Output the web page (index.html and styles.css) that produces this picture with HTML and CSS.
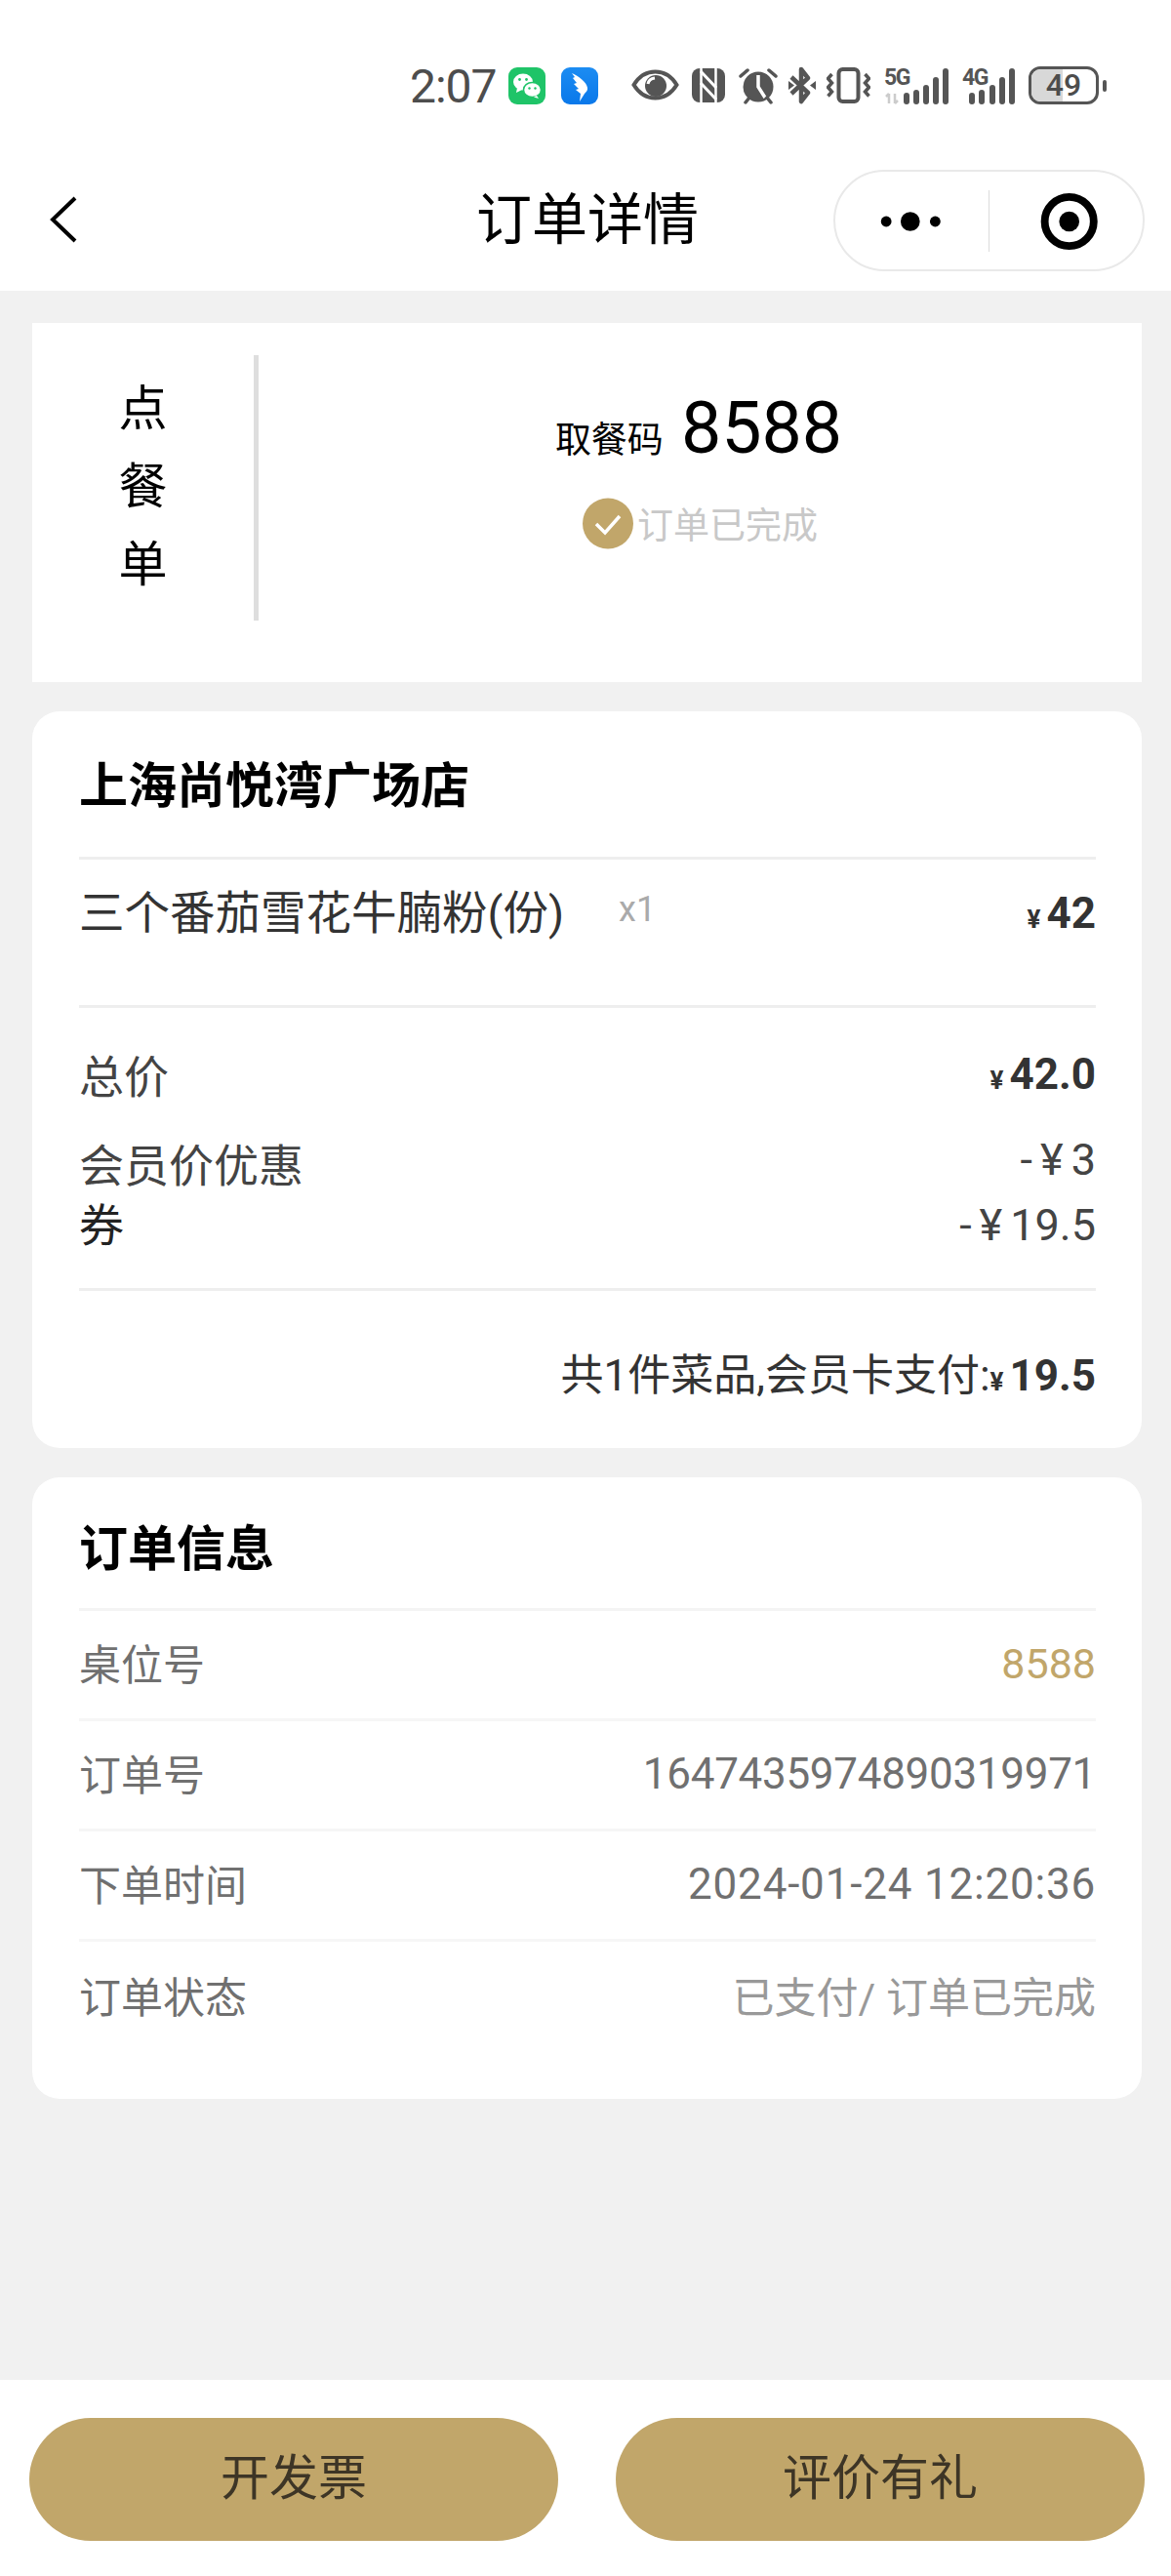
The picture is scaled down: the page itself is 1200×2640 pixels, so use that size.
FILE: index.html
```html
<!DOCTYPE html>
<html lang="zh-CN">

<head>
    <meta charset="UTF-8">
    <meta name="viewport" content="width=device-width, initial-scale=1.0">
    <title>订单详情</title>
    <link rel="stylesheet" href="styles.css">
</head>

<body>
    <header class="topBar">
        <div class="statusBar">
            <span class="clock">2:07</span>
            <svg class="appIcon" width="38" height="38" viewBox="0 0 38 38">
                <rect width="38" height="38" rx="9" fill="#1fc468" />
                <ellipse cx="15" cy="15" rx="10" ry="8.500" fill="#fff" />
                <path d="M9 21l-1 5 6-3z" fill="#fff" />
                <ellipse cx="24.500" cy="23" rx="9" ry="7.500" fill="#fff" stroke="#1fc468" stroke-width="1.500" />
                <path d="M29 29l2 3-5-1.500z" fill="#fff" />
                <circle cx="11.500" cy="12.500" r="1.400" fill="#1fc468" />
                <circle cx="18.500" cy="12.500" r="1.400" fill="#1fc468" />
                <circle cx="21.500" cy="21.500" r="1.200" fill="#1fc468" />
                <circle cx="27.500" cy="21.500" r="1.200" fill="#1fc468" />
            </svg>
            <svg class="appIcon blueIcon" width="38" height="38" viewBox="0 0 38 38">
                <defs>
                    <linearGradient id="blueFill" x1="0" y1="0" x2="0" y2="1">
                        <stop offset="0" stop-color="#1c8cf2" />
                        <stop offset="1" stop-color="#0a78ea" />
                    </linearGradient>
                </defs>
                <rect width="38" height="38" rx="9" fill="url(#blueFill)" />
                <path d="M11 6c7 3 15 9 16 15 .4 2.500-1 4-3 6l-5 8 1-8-5-4 3-1-5-5 3-1-4-5 2-1z" fill="#fff" />
            </svg>
            <svg class="eyeIcon" width="49" height="32" viewBox="0 0 49 32">
                <path d="M2.500 16C8 7 16 2.500 24.500 2.500S41 7 46.500 16C41 25 33 29.500 24.500 29.500S8 25 2.500 16Z" fill="none" stroke="#555" stroke-width="4" />
                <circle cx="25" cy="17" r="11" fill="#555" />
                <path d="M17 15c.5-3 3-5.500 7-6" fill="none" stroke="#fff" stroke-width="3" />
            </svg>
            <svg class="nfcIcon" width="34" height="35" viewBox="0 0 34 35">
                <rect width="34" height="35" rx="8" fill="#555" />
                <path d="M9.500 0V35M24.500 0V35" stroke="#fff" stroke-width="2.500" />
                <path d="M9 3L25 20M9 15L25 32" stroke="#fff" stroke-width="3" />
            </svg>
            <svg class="alarmIcon" width="40" height="38" viewBox="0 0 40 38">
                <circle cx="20" cy="20" r="15.500" fill="#555" />
                <path d="M20 8V20L27 31" fill="none" stroke="#fff" stroke-width="3.500" />
                <path d="M2 9L9 3M38 9L31 3M7 36L11 31M33 36L29 31" stroke="#555" stroke-width="3.500" stroke-linecap="round" />
            </svg>
            <svg class="btIcon" width="28" height="39" viewBox="0 0 28 39">
                <path d="M3 11L20 27L13 36V3L20 12L3 28" fill="none" stroke="#555" stroke-width="4.500" stroke-linejoin="round" />
                <path d="M0 15L6 19.500L0 24ZM28 15L22 19.500L28 24Z" fill="#555" />
            </svg>
            <svg class="vibrateIcon" width="45" height="37" viewBox="0 0 45 37">
                <rect x="12.500" y="2" width="20" height="33" rx="4" fill="none" stroke="#555" stroke-width="4" />
                <path d="M5.500 7L1.500 11.500L5.500 16L1.500 20.500L5.500 25L1.500 29.500M39.500 7L43.500 11.500L39.500 16L43.500 20.500L39.500 25L43.500 29.500" fill="none" stroke="#555" stroke-width="3.500" />
            </svg>
            <div class="signal">
                <span class="netText">5G</span>
                <svg width="67" height="38" viewBox="0 0 67 38">
                    <path d="M5 37V27M2 30L5 27M11 27V37M11 37L14 34" fill="none" stroke="#ccc" stroke-width="2.500" />
                    <rect x="20" y="26" width="6" height="12" rx="3" fill="#555" />
                    <rect x="30" y="23" width="6" height="15" rx="3" fill="#555" />
                    <rect x="40" y="18" width="6" height="20" rx="3" fill="#555" />
                    <rect x="50" y="10" width="6" height="28" rx="3" fill="#555" />
                    <rect x="60" y="1" width="6" height="37" rx="3" fill="#555" />
                </svg>
            </div>
            <div class="signal second">
                <span class="netText">4G</span>
                <svg width="54" height="38" viewBox="0 0 54 38">
                    <rect x="7" y="26" width="6" height="12" rx="3" fill="#555" />
                    <rect x="17" y="23" width="6" height="15" rx="3" fill="#555" />
                    <rect x="28" y="18" width="6" height="20" rx="3" fill="#555" />
                    <rect x="38" y="10" width="6" height="28" rx="3" fill="#555" />
                    <rect x="48" y="1" width="6" height="37" rx="3" fill="#555" />
                </svg>
            </div>
            <div class="battery">
                <div class="batteryBody">
                    <div class="batteryFill"></div>
                    <span class="batteryText">49</span>
                </div>
                <div class="batteryTip"></div>
            </div>
        </div>

        <nav class="navBar">
            <svg class="backIcon" width="30" height="48" viewBox="0 0 30 48">
                <path d="M27 2L4 24L27 46" fill="none" stroke="#000" stroke-width="4" />
            </svg>
            <h1 class="navTitle">订单详情</h1>
            <div class="capsule">
                <svg class="capsuleDots" width="159" height="63" viewBox="0 0 159 63">
                    <circle cx="53" cy="32" r="5.500" fill="#000" />
                    <circle cx="78" cy="32" r="10" fill="#000" />
                    <circle cx="104" cy="32" r="5.500" fill="#000" />
                </svg>
                <div class="capsuleLine"></div>
                <svg class="capsuleRecord" width="159" height="63" viewBox="0 0 159 63">
                    <circle cx="83" cy="32" r="25.500" fill="none" stroke="#000" stroke-width="8" />
                    <circle cx="83" cy="32" r="10.500" fill="#000" />
                </svg>
            </div>
        </nav>
    </header>

    <main class="content">
        <section class="codeCard">
            <div class="codeType">
                <span>点</span>
                <span>餐</span>
                <span>单</span>
            </div>
            <div class="codeMain">
                <div class="codeLine">
                    <span class="codeLabel">取餐码</span>
                    <span class="codeNum">8588</span>
                </div>
                <div class="codeStatus">
                    <svg width="52" height="53" viewBox="0 0 52 53">
                        <circle cx="26" cy="26.500" r="26" fill="#c1a66a" />
                        <path d="M14 27L23 36L38 19" fill="none" stroke="#fff" stroke-width="3.500" />
                    </svg>
                    <span>订单已完成</span>
                </div>
            </div>
        </section>

        <section class="card storeCard">
            <h2 class="cardTitle storeTitle">上海尚悦湾广场店</h2>
            <div class="dishRow">
                <span class="dishName">三个番茄雪花牛腩粉(份)</span>
                <span class="dishQty">x1</span>
                <span class="boldPrice dishPrice"><small>¥</small>42</span>
            </div>
            <div class="priceList">
                <div class="priceRow totalRow">
                    <span>总价</span>
                    <span class="boldPrice"><small>¥</small>42.0</span>
                </div>
                <div class="priceRow memberRow">
                    <span>会员价优惠</span>
                    <span class="minus"><i>-</i><i>¥</i>3</span>
                </div>
                <div class="priceRow couponRow">
                    <span class="dark">券</span>
                    <span class="minus"><i>-</i><i>¥</i>19.5</span>
                </div>
            </div>
            <div class="payRow">
                <span>共1件菜品,会员卡支付:</span>
                <span class="boldPrice"><small>¥</small>19.5</span>
            </div>
        </section>

        <section class="card infoCard">
            <h2 class="cardTitle infoTitle">订单信息</h2>
            <div class="infoRow">
                <span>桌位号</span>
                <span class="infoNum gold">8588</span>
            </div>
            <div class="infoRow">
                <span>订单号</span>
                <span class="infoNum orderNum">1647435974890319971</span>
            </div>
            <div class="infoRow">
                <span>下单时间</span>
                <span class="infoNum orderTime">2024-01-24 12:20:36</span>
            </div>
            <div class="infoRow">
                <span>订单状态</span>
                <span class="light">已支付/ 订单已完成</span>
            </div>
        </section>
    </main>

    <footer class="bottomBar">
        <button class="goldBtn">开发票</button>
        <button class="goldBtn">评价有礼</button>
    </footer>
</body>

</html>
```

FILE: styles.css
```css
*{
    margin: 0;
    padding: 0;
    box-sizing: border-box;
}

body{
    width: 1200px;
    height: 2640px;
    display: flex;
    flex-direction: column;
    background-color: #f1f1f1;
    font-family: Roboto, "Noto Sans CJK SC", sans-serif;
    overflow: hidden;
}

/* status bar + title */
.topBar{
    height: 298px;
    background-color: #fff;
}

.statusBar{
    height: 174px;
    padding: 68px 0 0 420px;
    display: flex;
    align-items: flex-start;
}

.clock{
    width: 101px;
    font-size: 48px;
    line-height: 42px;
    color: #4d4d4d;
    letter-spacing: -1px;
    white-space: nowrap;
}

.blueIcon{
    margin-left: 16px;
}

.appIcon{
    margin-top: 1px;
}

.eyeIcon{
    margin: 3px 0 0 34px;
}

.nfcIcon{
    margin: 2px 0 0 13px;
}

.alarmIcon{
    margin: 1px 0 0 14px;
}

.btIcon{
    margin-left: 11px;
}

.vibrateIcon{
    margin: 1px 0 0 11px;
}

.signal{
    position: relative;
    height: 38px;
    margin: 1px 0 0 14px;
}

.signal svg{
    display: block;
}

.signal.second{
    margin-left: 13px;
}

.netText{
    position: absolute;
    left: 0;
    top: 0;
    font-size: 23px;
    line-height: 22px;
    font-weight: 700;
    color: #555;
    letter-spacing: -1.500px;
}

.battery{
    margin-left: 14px;
    display: flex;
    align-items: center;
}

.batteryBody{
    position: relative;
    width: 72px;
    height: 39px;
    border: 3px solid #555;
    border-radius: 12px;
    overflow: hidden;
    display: flex;
    align-items: center;
    justify-content: center;
}

.batteryFill{
    position: absolute;
    left: 0;
    top: 0;
    bottom: 0;
    width: 49%;
    background-color: #d8d8d8;
}

.batteryText{
    position: relative;
    font-size: 32px;
    line-height: 33px;
    font-weight: 500;
    color: #4d4d4d;
}

.batteryTip{
    width: 4px;
    height: 12px;
    margin-left: 4px;
    border-radius: 2px;
    background-color: #555;
}

.navBar{
    position: relative;
    height: 124px;
    padding-left: 50px;
    display: flex;
    align-items: center;
}

.backIcon{
    margin-top: -22px;
}

.navTitle{
    position: absolute;
    left: 488px;
    top: 12px;
    font-size: 57px;
    line-height: 80px;
    font-weight: 400;
    color: #000;
}

.capsule{
    position: absolute;
    left: 854px;
    top: 0;
    width: 319px;
    height: 104px;
    border: 2px solid #e9e9e9;
    border-radius: 52px;
    display: flex;
    align-items: center;
}

.capsuleLine{
    width: 2px;
    height: 63px;
    background-color: #dcdcdc;
}

/* cards */
.content{
    flex: 1;
    padding: 33px 30px 0 33px;
}

.codeCard{
    height: 368px;
    padding-top: 33px;
    background-color: #fff;
    display: flex;
    align-items: flex-start;
}

.codeType{
    width: 232px;
    height: 272px;
    padding-top: 15px;
    border-right: 5px solid #dedede;
    display: flex;
    flex-direction: column;
    align-items: center;
    font-size: 50px;
    line-height: 80px;
    color: #000;
}

.codeMain{
    flex: 1;
    padding-top: 37px;
    display: flex;
    flex-direction: column;
    align-items: center;
}

.codeLine{
    height: 76px;
    margin-left: -3px;
    display: flex;
    align-items: baseline;
    color: #000;
}

.codeLabel{
    font-size: 37px;
    margin-right: 18px;
}

.codeNum{
    font-size: 73.500px;
    line-height: 76px;
}

.codeStatus{
    margin-top: 32px;
    display: flex;
    align-items: center;
    gap: 4px;
    font-size: 37px;
    color: #c8c8c8;
}

.card{
    margin-top: 30px;
    padding: 0 47px 0 48px;
    background-color: #fff;
    border-radius: 28px;
}

.storeCard{
    height: 755px;
}

.infoCard{
    height: 637px;
}

.cardTitle{
    font-size: 50px;
    font-weight: 700;
    color: #000;
    border-bottom: 3px solid #eee;
}

.storeTitle{
    height: 152px;
    padding-top: 43px;
    line-height: 68px;
}

.dishRow{
    height: 152px;
    padding-top: 22px;
    border-bottom: 3px solid #eee;
    display: flex;
    align-items: flex-start;
    color: #333;
}

.dishName{
    font-size: 46.500px;
    line-height: 66px;
}

.dishQty{
    margin: 6px 0 0 56px;
    font-size: 36px;
    line-height: 46px;
    color: #aaa;
}

.dishPrice{
    margin-left: auto;
    line-height: 66px;
}

.boldPrice{
    font-size: 44px;
    font-weight: 700;
    color: #333;
}

.boldPrice small{
    font-size: 26px;
    margin-right: 6px;
}

.priceList{
    height: 290px;
    padding-top: 36px;
    border-bottom: 3px solid #eee;
    font-size: 46px;
    color: #444;
}

.priceRow{
    display: flex;
    justify-content: space-between;
    align-items: center;
    line-height: 64px;
}

.memberRow{
    margin-top: 24px;
    align-items: flex-start;
}

.memberRow .minus{
    margin-top: -6px;
}

.couponRow{
    margin-top: -3px;
}

.dark{
    color: #222;
}

.minus{
    font-size: 45px;
}

.minus i{
    font-style: normal;
    margin-right: 8px;
}

.payRow{
    padding-top: 55px;
    display: flex;
    justify-content: flex-end;
    align-items: baseline;
    font-size: 44px;
    line-height: 64px;
    color: #333;
}

.infoTitle{
    height: 137px;
    padding-top: 40px;
    line-height: 68px;
    border-bottom-color: #f4f4f4;
}

.infoRow{
    height: 113px;
    padding-bottom: 6px;
    border-bottom: 3px solid #f6f6f6;
    display: flex;
    justify-content: space-between;
    align-items: center;
    font-size: 43px;
    color: #707070;
}

.infoRow:last-child{
    border-bottom: 0;
}

.infoNum{
    margin-top: 4px;
    font-size: 44px;
}

.orderNum{
    letter-spacing: -.300px;
}

.orderTime{
    letter-spacing: .800px;
}

.gold{
    font-size: 43px;
    color: #c1a66a;
}

.light{
    color: #999;
}

/* bottom buttons */
.bottomBar{
    height: 201px;
    padding: 39px 27px 0 30px;
    background-color: #fff;
    display: flex;
    justify-content: space-between;
    align-items: flex-start;
}

.goldBtn{
    width: 542px;
    height: 126px;
    padding-bottom: 12px;
    border: 0;
    border-radius: 63px;
    background-color: #c1a66a;
    color: #3d3526;
    font-family: inherit;
    font-size: 50px;
}
```
